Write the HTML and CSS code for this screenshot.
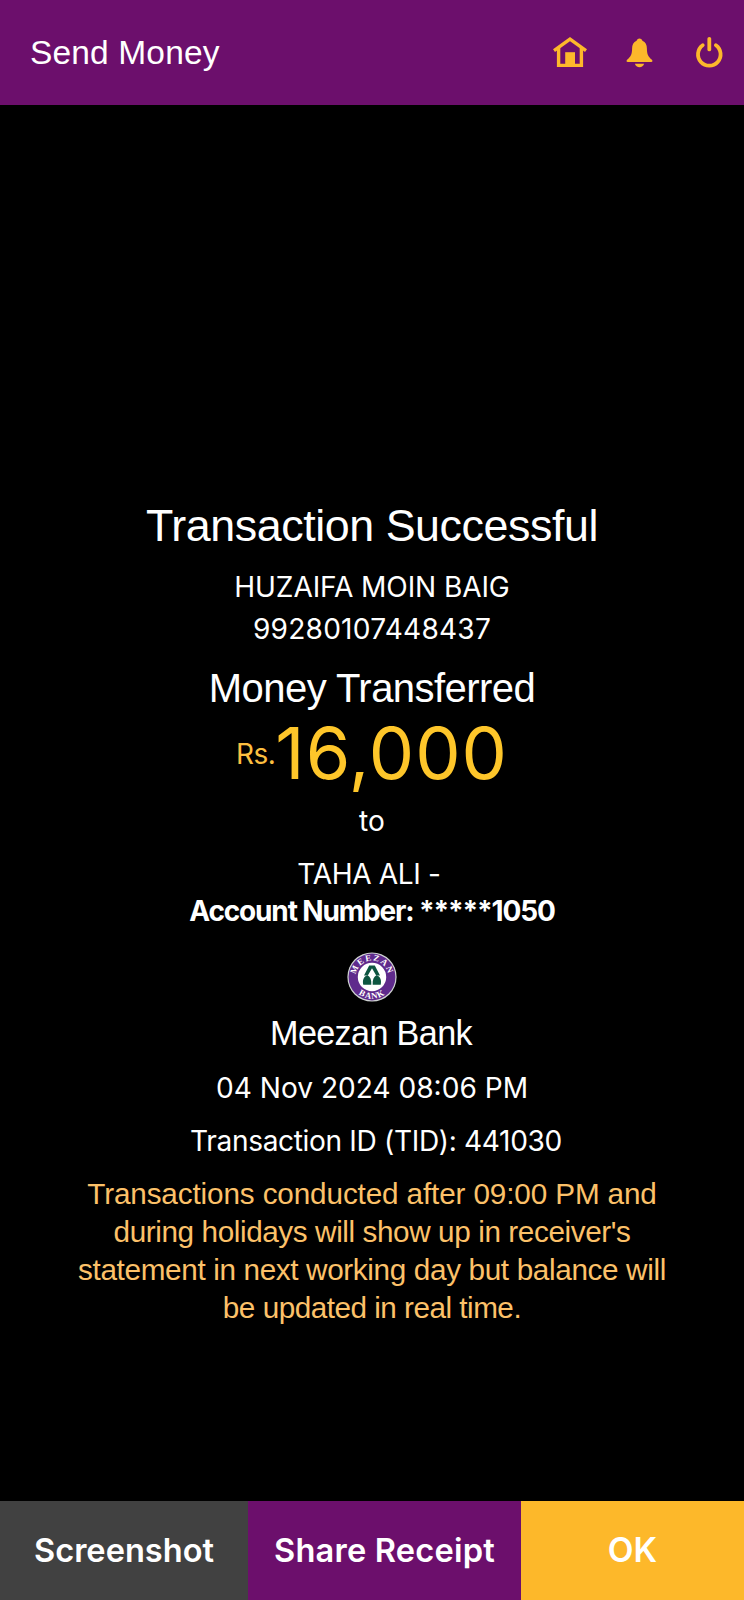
FILE: index.html
```html
<!DOCTYPE html>
<html lang="en">
<head>
<meta charset="utf-8">
<title>Send Money</title>
<link rel="stylesheet" href="styles.css">
</head>
<body>
<div class="screen">
  <header class="topbar">
    <h1 class="topbar-title">Send Money</h1>
    <nav class="topbar-icons">
      <svg class="icon" viewBox="0 0 36 36" aria-label="Home">
        <path d="M2 14.6 18 3.2l16 11.4" fill="none" stroke="currentColor" stroke-width="3.4"/>
        <path d="M6.6 12v17.4h22.8V12" fill="none" stroke="currentColor" stroke-width="3.4"/>
        <path d="M13.2 16.2h9.8V30h-9.8z" fill="currentColor"/>
      </svg>
      <svg class="icon" viewBox="0 0 36 36" aria-label="Notifications">
        <path d="M17.500 2.400c1.500 0 2.700 1 2.900 2.300 3.200 1.200 4.500 4.200 4.500 7.800 0 6 1.500 8.300 5 11.200.9.8.8 2.300-.7 2.300H5.800c-1.500 0-1.600-1.500-.7-2.300 3.500-2.900 5-5.200 5-11.200 0-3.600 1.300-6.600 4.500-7.800.2-1.300 1.400-2.300 2.900-2.300z" fill="currentColor"/>
        <path d="M12.900 27.800h9.200c-.6 2.200-2.400 3.400-4.600 3.400s-4-1.200-4.600-3.400z" fill="currentColor"/>
      </svg>
      <svg class="icon" viewBox="0 0 36 36" fill="none" stroke="currentColor" stroke-width="3.8" stroke-linecap="round" aria-label="Log out">
        <path d="M18.300 2.800v10.600"/>
        <path d="M11.700 9.200a11.300 11.300 0 1 0 13.200 0"/>
      </svg>
    </nav>
  </header>

  <main class="receipt">
    <h2 class="status">Transaction Successful</h2>
    <p class="line sender">HUZAIFA MOIN BAIG</p>
    <p class="line sender-account">99280107448437</p>
    <h3 class="transferred">Money Transferred</h3>
    <p class="amount"><span class="currency">Rs.</span><span class="value">16,000</span></p>
    <p class="line to">to</p>
    <p class="line recipient">TAHA ALI -</p>
    <p class="line recipient-account">Account Number: *****1050</p>
    <svg class="bank-logo" viewBox="0 0 50 50" aria-label="Meezan Bank">
      <defs>
        <path id="arc-top" d="M9.200 29a16.300 16.300 0 1 1 31.600 0"/>
        <path id="arc-bottom" d="M3.200 25a21.800 21.800 0 0 0 43.600 0"/>
      </defs>
      <circle cx="25" cy="25" r="24.6" fill="#cfd3d2"/>
      <circle cx="25" cy="25" r="23.4" fill="#5f2a8c"/>
      <circle cx="25" cy="25" r="14.2" fill="#fff"/>
      <text class="logo-text"><textPath href="#arc-top" startOffset="50%" text-anchor="middle">MEEZAN</textPath></text>
      <text class="logo-text logo-text-bottom"><textPath href="#arc-bottom" startOffset="50%" text-anchor="middle">BANK</textPath></text>
      <path d="M22.200 13.500h5.600l5.200 10h-3.800L25 16.200l-4.200 7.300H17z" fill="#0d5540"/>
      <path d="M20.600 23.300c2.800 1.500 4 4.800 3.700 9.400h-8c-1-4.500.3-8.300 4.300-9.400zM29.400 23.300c-2.800 1.500-4 4.800-3.700 9.400h8c1-4.500-.3-8.300-4.300-9.400z" fill="#0d5540"/>
    </svg>
    <p class="bank-name">Meezan Bank</p>
    <p class="line date">04 Nov 2024 08:06 PM</p>
    <p class="line tid">Transaction ID (TID): 441030</p>
    <p class="line notice">
      <span class="notice-a">Transactions conducted after 09:00 PM and</span>
      <span class="notice-b">during holidays will show up in receiver's</span>
      <span class="notice-c">statement in next working day but balance will</span>
      <span class="notice-d">be updated in real time.</span>
    </p>
  </main>

  <footer class="actions">
    <button class="action action-screenshot">Screenshot</button>
    <button class="action action-share">Share Receipt</button>
    <button class="action action-ok">OK</button>
  </footer>
</div>
</body>
</html>
```
FILE: styles.css
```css
* {
  box-sizing: border-box;
  margin: 0;
  padding: 0;
}

body {
  background: #000;
  color: #fff;
  font-family: Inter, "Liberation Sans", Arial, sans-serif;
}

.screen {
  display: flex;
  flex-direction: column;
  width: 744px;
  height: 1600px;
}

.topbar-title,
.status,
.transferred,
.bank-name,
.notice {
  font-family: "Liberation Sans", Arial, sans-serif;
  font-weight: 400;
}

.topbar {
  display: flex;
  align-items: center;
  justify-content: space-between;
  height: 105px;
  padding: 0 17px 0 30px;
  background: #6c0f6c;
}

.topbar-title {
  font-size: 33.5px;
  line-height: 40px;
  letter-spacing: 0.15px;
}

.topbar-icons {
  display: flex;
  gap: 33.5px;
  padding-top: 3px;
  color: #fdb82b;
}

.icon {
  display: block;
  width: 36px;
  height: 36px;
}

.receipt {
  display: flex;
  flex: 1;
  flex-direction: column;
  align-items: center;
  padding-top: 391.5px;
  text-align: center;
  white-space: nowrap;
}

.status {
  font-size: 44.8px;
  line-height: 56px;
  letter-spacing: -0.43px;
}

.line {
  font-size: 28.1px;
  line-height: 38px;
}

.sender {
  margin-top: 13.5px;
  line-height: 42px;
  letter-spacing: -0.12px;
}

.sender-account {
  line-height: 42px;
  letter-spacing: 0.22px;
}

.transferred {
  margin-top: 13.5px;
  font-size: 40px;
  line-height: 48px;
  letter-spacing: -0.55px;
}

.amount {
  display: flex;
  align-items: center;
  margin-top: -1px;
  line-height: 84px;
  color: #fec62a;
}

.currency {
  padding-top: 1px;
  font-size: 28px;
  letter-spacing: -0.5px;
  color: #fcbf40;
}

.value {
  font-size: 72px;
  letter-spacing: 1px;
}

.to {
  margin-top: 4px;
  line-height: 42px;
}

.recipient {
  margin-top: 13px;
  padding-right: 6px;
  letter-spacing: -0.36px;
}

.recipient-account {
  margin-top: -0.5px;
  font-size: 28px;
  font-weight: 700;
  letter-spacing: -1.15px;
}

.bank-logo {
  width: 50px;
  height: 50px;
  margin-top: 21.5px;
}

.logo-text {
  fill: #fff;
  font-family: "Liberation Serif", serif;
  font-size: 8.8px;
  font-weight: 700;
  letter-spacing: 1.3px;
}

.logo-text-bottom {
  letter-spacing: 0.9px;
}

.bank-name {
  margin-top: 10.5px;
  padding-right: 2px;
  font-size: 34.2px;
  line-height: 42px;
  letter-spacing: -0.65px;
}

.date {
  margin-top: 14.5px;
}

.tid {
  margin-top: 15.5px;
  padding-left: 8px;
  letter-spacing: -0.35px;
}

.notice {
  display: flex;
  flex-direction: column;
  align-items: center;
  margin-top: 14.5px;
  font-size: 29.7px;
  color: #fcc169;
}

.notice-a {
  letter-spacing: -0.13px;
}

.notice-b {
  letter-spacing: -0.4px;
}

.notice-c {
  letter-spacing: -0.35px;
}

.notice-d {
  letter-spacing: -0.5px;
}

.actions {
  display: grid;
  grid-template-columns: 248px 273px 223px;
  height: 99px;
}

.action {
  padding-bottom: 2px;
  border: 0;
  color: #fff;
  font-family: inherit;
  font-size: 32.6px;
  font-weight: 600;
}

.action-screenshot {
  background: #414141;
}

.action-share {
  background: #6c0f6c;
  letter-spacing: 0.2px;
}

.action-ok {
  background: #fdb82a;
  font-size: 33.5px;
}
```
